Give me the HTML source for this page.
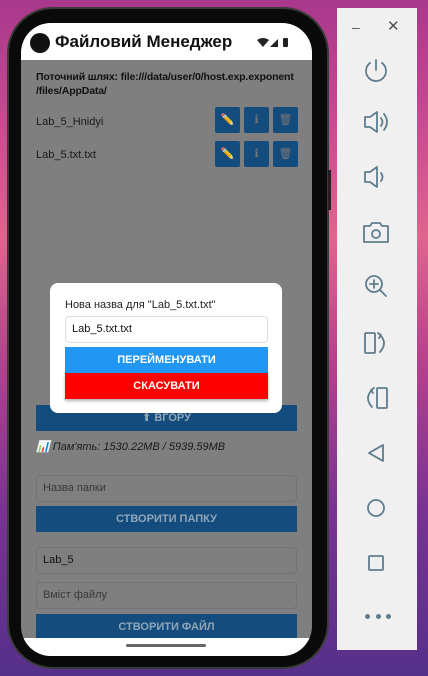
<!DOCTYPE html>
<html><head><meta charset="utf-8"><style>
*{margin:0;padding:0;box-sizing:border-box}
body{width:428px;height:676px;overflow:hidden;position:relative;font-family:"Liberation Sans","DejaVu Sans",sans-serif;
background:linear-gradient(180deg,#a8388c 0%,#c84a92 18%,#e0648e 35%,#b0408e 55%,#7a3392 75%,#55308a 100%)}
.abs{position:absolute}
.phone{left:7px;top:7px;width:322px;height:662px;background:#0a0a0a;border-radius:46px;border:2px solid #3a3a3a}
.screen{left:21px;top:23px;width:291px;height:633px;background:#7f7f7f;border-radius:30px;overflow:hidden}
.t{position:absolute;font-size:11px;color:#111;white-space:nowrap}
.ib{position:absolute;width:25px;height:26px;background:#154c7e;border-radius:2px;font-size:11px;text-align:center;line-height:26px}
.btn{position:absolute;left:15px;width:261px;height:26px;background:#154c7e;color:#8fa6b8;font-size:11px;text-align:center;line-height:26px;font-weight:bold}
.inp{position:absolute;left:15px;width:261px;height:27px;border:1px solid #737373;border-radius:4px;background:#7f7f7f;font-size:11px;line-height:25px;padding-left:6px;color:#3a3a3a}
.side{left:337px;top:8px;width:80px;height:642px;background:#f0f0f0}
</style></head><body>
<div class="abs phone"></div>
<div class="abs screen">
  <div class="abs" style="left:0;top:0;width:291px;height:37px;background:#fff"></div>
  <div class="abs" style="left:9px;top:10px;width:20px;height:20px;border-radius:50%;background:#111"></div>
  <div class="abs" style="left:34px;top:9px;font-size:17px;font-weight:bold;color:#111">Файловий Менеджер</div>
  <svg class="abs" style="left:236px;top:14px" width="36" height="12"><path d="M0 3 Q6 -1 12 3 L6 10Z" fill="#222"/><path d="M13 10 L21 2 L21 10Z" fill="#222"/><rect x="26" y="1" width="5" height="9" rx="1" fill="#222"/></svg>
  <div class="t" style="left:15px;top:47px;font-weight:bold;line-height:14px;font-size:10.5px;letter-spacing:-0.15px">Поточний шлях: file:///data/user/0/host.exp.exponent<br>/files/AppData/</div>
  <div class="t" style="left:15px;top:93px;color:#1a1a1a">Lab_5_Hnidyi</div>
  <div class="ib" style="left:194px;top:84px">✏️</div><div class="ib" style="left:223px;top:84px;color:#777">ℹ</div><div class="ib" style="left:252px;top:84px;color:#777">🗑</div>
  <div class="t" style="left:15px;top:126px;color:#1a1a1a">Lab_5.txt.txt</div>
  <div class="ib" style="left:194px;top:118px">✏️</div><div class="ib" style="left:223px;top:118px;color:#777">ℹ</div><div class="ib" style="left:252px;top:118px;color:#777">🗑</div>
  <div class="btn" style="top:382px">⬆ ВГОРУ</div>
  <div class="t" style="left:15px;top:417px;font-style:italic;color:#1a1a1a">📊 Пам'ять: 1530.22MB / 5939.59MB</div>
  <div class="inp" style="top:452px">Назва папки</div>
  <div class="btn" style="top:483px">СТВОРИТИ ПАПКУ</div>
  <div class="inp" style="top:524px;color:#111">Lab_5</div>
  <div class="inp" style="top:559px">Вміст файлу</div>
  <div class="btn" style="top:591px">СТВОРИТИ ФАЙЛ</div>
  <div class="abs" style="left:0;top:615px;width:291px;height:20px;background:#fff"></div>
  <div class="abs" style="left:105px;top:621px;width:80px;height:3px;border-radius:2px;background:#666"></div>
  <div class="abs" style="left:29px;top:260px;width:232px;height:130px;background:#fff;border-radius:8px"></div>
  <div class="t" style="left:44px;top:276px;color:#222">Нова назва для "Lab_5.txt.txt"</div>
  <div class="abs" style="left:44px;top:293px;width:203px;height:27px;border:1px solid #ddd;border-radius:4px;font-size:11px;line-height:25px;padding-left:6px;color:#111">Lab_5.txt.txt</div>
  <div class="abs" style="left:44px;top:324px;width:203px;height:26px;background:#2196f3;color:#fff;font-size:11px;font-weight:bold;text-align:center;line-height:26px">ПЕРЕЙМЕНУВАТИ</div>
  <div class="abs" style="left:44px;top:350px;width:203px;height:26px;background:#ff0000;color:#fff;font-size:11px;font-weight:bold;text-align:center;line-height:26px;box-shadow:0 2px 3px rgba(0,0,0,.3)">СКАСУВАТИ</div>
</div>
<div class="abs" style="left:328px;top:170px;width:3px;height:40px;background:#222"></div>
<div class="abs side"></div>
<div class="abs" style="left:352px;top:19px;font-size:14px;color:#555">–</div>
<div class="abs" style="left:387px;top:17px;font-size:15px;color:#555">✕</div>
<svg class="abs" style="left:337px;top:8px" width="80" height="642" fill="none" stroke="#5f7d8c" stroke-width="1.8" stroke-linecap="round" stroke-linejoin="round">
<path d="M39 52 V62"/><path d="M33 55 A10 10 0 1 0 45 55"/>
<path d="M28 109 H33 L40 104 V124 L33 119 H28Z"/><path d="M44 110 Q47 114 44 118"/><path d="M47 106 Q53 114 47 122"/>
<path d="M28 164 H33 L40 159 V179 L33 174 H28Z"/><path d="M44 165 Q47 169 44 173"/>
<path d="M27 218 H33 L35 215 H43 L45 218 H51 V234 H27Z"/><circle cx="39" cy="226" r="4"/>
<circle cx="37" cy="276" r="8"/><path d="M43 282 L49 288 M37 272 V280 M33 276 H41"/>
<rect x="28" y="325" width="10" height="20" rx="1"/><path d="M43 327 Q51 335 43 344 M41 325 L44 327 L42 330"/>
<rect x="40" y="380" width="10" height="20" rx="1"/><path d="M35 382 Q27 390 35 399 M37 380 L34 382 L36 385"/>
<path d="M46 437 V453 L32 445Z"/>
<circle cx="39" cy="500" r="8"/>
<rect x="32" y="548" width="14" height="14" rx="1"/>
</svg>
<div class="abs" style="left:365px;top:614px;width:26px;display:flex;justify-content:space-between"><i style="width:5px;height:5px;border-radius:50%;background:#5f7d8c"></i><i style="width:5px;height:5px;border-radius:50%;background:#5f7d8c"></i><i style="width:5px;height:5px;border-radius:50%;background:#5f7d8c"></i></div>
</body></html>
